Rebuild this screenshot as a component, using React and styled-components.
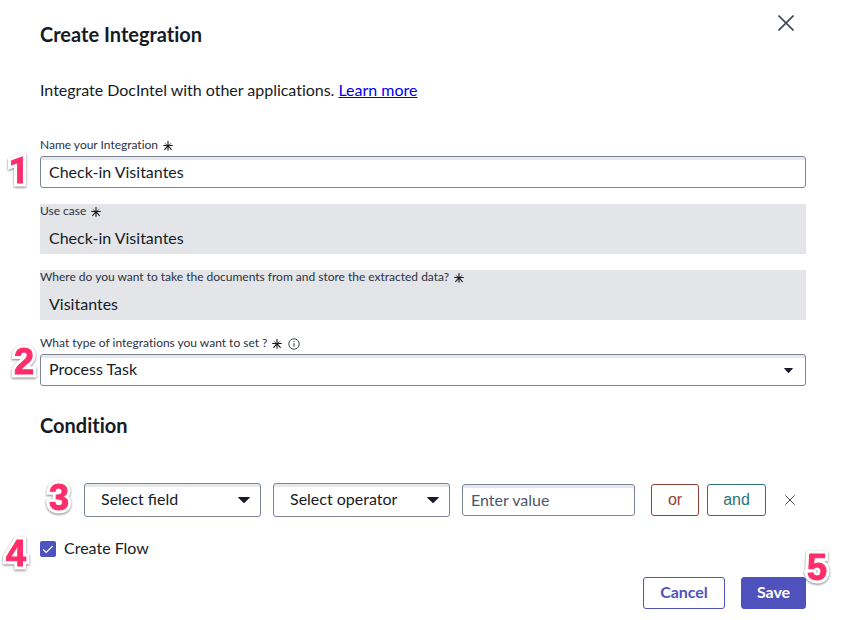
import React from 'react';
import styled, { createGlobalStyle } from 'styled-components';

const GlobalStyle = createGlobalStyle`
  *, *::before, *::after { box-sizing: border-box; }
  body { margin: 0; background: #fff; }
`;

const Dialog = styled.main`
  position: relative;
  width: 844px;
  height: 620px;
  padding: 0 38px 0 40px;
  overflow: hidden;
  display: flex;
  flex-direction: column;
  background: #fff;
  color: #161b25;
  font-family: Lato, sans-serif;
  font-size: 16px;
  line-height: 24px;
`;

const Header = styled.header`
  display: flex;
  justify-content: space-between;
  align-items: flex-start;
  height: 78px;
  padding-top: 11px;
`;

const Title = styled.h2`
  margin: ${p => p.$top || 0}px 0 0;
  font-size: 20px;
  font-weight: 700;
  line-height: 24px;
  font-variant-ligatures: none;
`;

const IconButton = styled.button`
  display: flex;
  align-items: center;
  justify-content: center;
  width: ${p => p.$size}px;
  height: ${p => p.$size}px;
  margin: 0 ${p => p.$right || 0}px 0 ${p => p.$left || 0}px;
  padding: 0;
  border: 0;
  background: none;
  color: #3f4757;
`;

const Intro = styled.p`
  margin: 0 0 36px;
  height: 24px;
  letter-spacing: -0.015px;
  white-space: nowrap;
`;

const Link = styled.a`
  color: #0000ee;
  text-decoration: underline;
`;

const Field = styled.div`
  display: flex;
  flex-direction: column;
  height: 50px;
  margin-bottom: 16px;
  background: ${p => (p.$readOnly ? '#e4e5e9' : 'transparent')};
`;

const Label = styled.label`
  display: flex;
  align-items: center;
  height: 18px;
  padding-bottom: 4px;
  color: #2b3242;
  font-size: 12px;
  line-height: 14px;
  letter-spacing: -0.01px;
  white-space: nowrap;
`;

const Control = styled.div`
  display: flex;
  align-items: center;
  justify-content: space-between;
  flex: none;
  width: ${p => (p.$width ? `${p.$width}px` : 'auto')};
  height: ${p => p.$height || 32}px;
  padding: 0 ${p => p.$end || 8}px ${p => p.$lift || 0}px ${p => p.$start || 8}px;
  border: 1px solid ${p => (p.$plain ? 'transparent' : '#7c8496')};
  border-radius: 3px;
  box-shadow: ${p => (p.$plain ? 'none' : 'inset 0 3px 0 #e6e8e9')};
  color: ${p => (p.$muted ? '#4e5768' : 'inherit')};
`;

const ConditionRow = styled.div`
  display: flex;
  align-items: center;
  height: 34px;
  margin: 46px 0 0 44px;
`;

const Gap = styled.span`
  flex: none;
  width: ${p => p.$w}px;
`;

const JoinButton = styled.button`
  width: ${p => p.$width}px;
  height: 32px;
  padding: 0 0 1px;
  border: 1px solid currentColor;
  border-radius: 3px;
  background: #fff;
  color: ${p => p.$color};
  font: 16px/24px "Liberation Sans", Arial, sans-serif;
`;

const CheckRow = styled.label`
  display: flex;
  align-items: center;
  height: 24px;
  margin-top: 20px;
  gap: 8px;
`;

const CheckText = styled.span`
  padding-bottom: 2px;
`;

const CheckBox = styled.span`
  display: flex;
  width: 16px;
  height: 16px;
  border-radius: 2px;
  background: #4f52bd;
`;

const Actions = styled.footer`
  display: flex;
  justify-content: flex-end;
  gap: 16px;
  margin-top: 16px;
`;

const ActionButton = styled.button`
  width: ${p => p.$width}px;
  height: 32px;
  padding: 0 0 2px;
  border: 1px solid #4f52bd;
  border-radius: 3px;
  background: ${p => (p.$primary ? '#4f52bd' : '#fff')};
  color: ${p => (p.$primary ? '#fff' : '#4f52bd')};
  font: 700 16px/24px Lato, sans-serif;
  letter-spacing: -0.05px;
`;

const StepBadge = styled.span`
  position: absolute;
  left: ${p => p.$x}px;
  top: ${p => p.$y}px;
  color: #ff2d6b;
  font: 700 36px/36px ${p => (p.$narrow ? 'Roboto' : '"Liberation Sans"')}, Arial, sans-serif;
  -webkit-text-stroke: ${p => (p.$narrow ? 0.8 : 1)}px #ff2d6b;
  filter: drop-shadow(0 1.5px 1px rgba(0, 0, 0, 0.5));

  &::before {
    content: attr(data-step);
    position: absolute;
    left: 0;
    top: 0;
    z-index: -1;
    color: #fff;
    -webkit-text-stroke: 7px #fff;
    stroke-linejoin: round;
  }
`;

const Drawing = styled.svg`
  display: block;
  flex: none;
  margin-left: ${p => p.$ml || 0}px;
  margin-top: ${p => p.$mt || 0}px;
`;

const Cross = ({ size, stroke }) => (
  <Drawing width={size} height={size} viewBox="0 0 16 16" fill="none" stroke="currentColor" strokeWidth={stroke}>
    <path d="M.5.5l15 15M15.5.5l-15 15" />
  </Drawing>
);

const Required = () => (
  <Drawing $ml={4.5} $mt={2} width="10" height="10" viewBox="0 0 10 10" fill="none" stroke="#161b25" strokeWidth="1.1">
    <path d="M5 0v9.8M.2 4.5h9.6M5 4.6L1.4 8.9M5 4.6l3.6 4.3" />
    <path d="M5 4.6L1.6 2.2M5 4.6l3.4-2.4" strokeWidth="0.6" />
  </Drawing>
);

const Info = () => (
  <Drawing $ml={6.5} $mt={1} width="12" height="12" viewBox="0 0 12 12" fill="none" stroke="#2b3242">
    <circle cx="6" cy="6" r="5.2" strokeWidth="0.9" />
    <path d="M6 5.2v3.5M6 3.1v1.1" />
  </Drawing>
);

const Caret = ({ w = 12, h = 6, mt = 1 }) => (
  <Drawing $mt={mt} width={w} height={h} viewBox="0 0 12 6" preserveAspectRatio="none" fill="#161b25">
    <path d="M.4 0h11.2q.5.2.1.7L6.6 5.7q-.6.5-1.2 0L.3.7Q-.1.2.4 0z" />
  </Drawing>
);

const steps = [
  ['1', 8.5, 152.5],
  ['2', 14, 344],
  ['3', 49, 480],
  ['4', 6, 536],
  ['5', 807, 550],
];

export default function App() {
  return (
    <Dialog>
      <GlobalStyle />
      <Header>
        <Title $top={11}>Create Integration</Title>
        <IconButton $size={24} $right={8} aria-label="Close">
          <Cross size={16} stroke={1.6} />
        </IconButton>
      </Header>
      <Intro>
        Integrate DocIntel with other applications. <Link href="#">Learn more</Link>
      </Intro>
      <Field>
        <Label>Name your Integration<Required /></Label>
        <Control>Check-in Visitantes</Control>
      </Field>
      <Field $readOnly>
        <Label>Use case<Required /></Label>
        <Control $plain>Check-in Visitantes</Control>
      </Field>
      <Field $readOnly>
        <Label>Where do you want to take the documents from and store the extracted data?<Required /></Label>
        <Control $plain>Visitantes</Control>
      </Field>
      <Field>
        <Label>What type of integrations you want to set ?<Required /><Info /></Label>
        <Control $end={12} $lift={2}>Process Task<Caret w={9} h={5} mt={2} /></Control>
      </Field>
      <Title $top={11}>Condition</Title>
      <ConditionRow>
        <Control $width={177} $height={34} $start={16} $end={10} $lift={2}>Select field<Caret /></Control>
        <Gap $w={12} />
        <Control $width={177} $height={34} $start={16} $end={10} $lift={2}>Select operator<Caret /></Control>
        <Gap $w={12} />
        <Control $width={173} $muted>Enter value</Control>
        <Gap $w={16} />
        <JoinButton $width={48} $color="#8f4135">or</JoinButton>
        <Gap $w={8} />
        <JoinButton $width={59} $color="#2f7378">and</JoinButton>
        <IconButton $size={24} $left={12} aria-label="Remove condition">
          <Cross size={10} stroke={1.6} />
        </IconButton>
      </ConditionRow>
      <CheckRow>
        <CheckBox>
          <Drawing width="16" height="16" viewBox="0 0 16 16" fill="none" stroke="#fff" strokeWidth="1.1">
            <path d="M3.2 8.5l3 3 6.5-6.5" />
          </Drawing>
        </CheckBox>
        <CheckText>Create Flow</CheckText>
      </CheckRow>
      <Actions>
        <ActionButton $width={82}>Cancel</ActionButton>
        <ActionButton $width={65} $primary>Save</ActionButton>
      </Actions>
      {steps.map(([n, x, y]) => (
        <StepBadge key={n} data-step={n} $x={x} $y={y} $narrow={n === '1'}>{n}</StepBadge>
      ))}
    </Dialog>
  );
}
